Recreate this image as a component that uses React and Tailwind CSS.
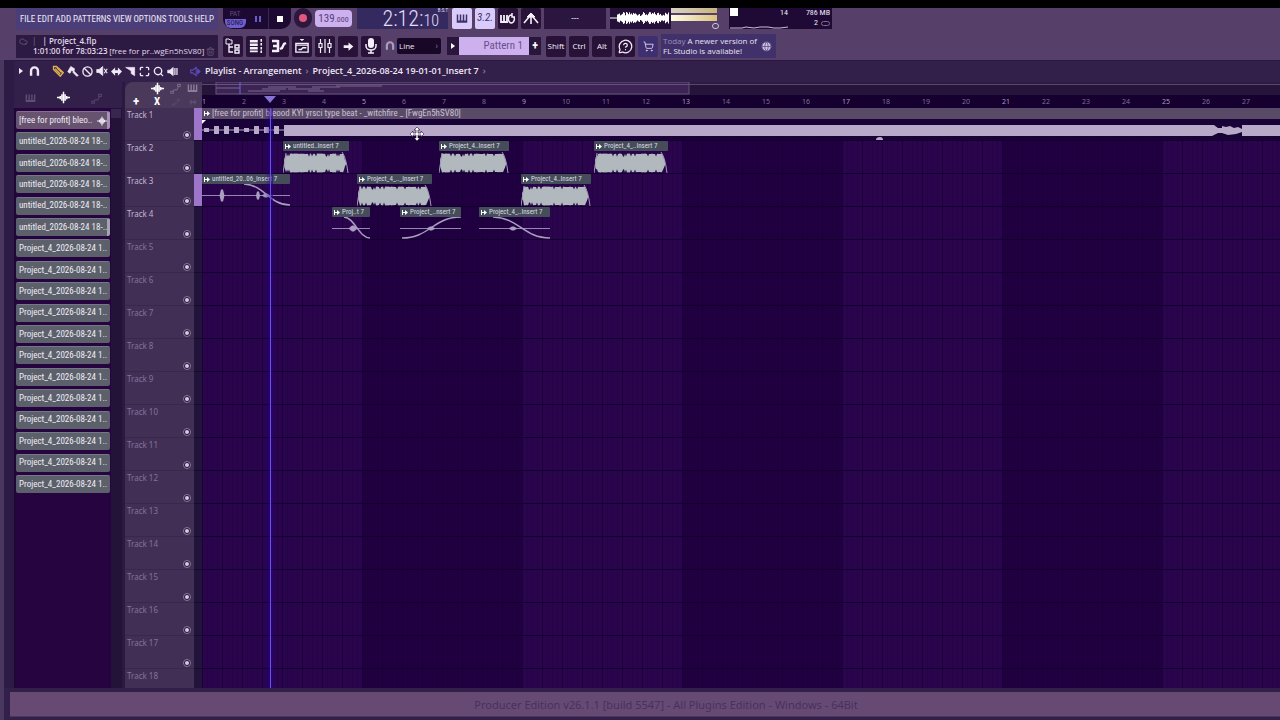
import {
  Ban,
  Cloud,
  Globe,
  Maximize,
  MessageCircleQuestionMark,
  Search,
  ShoppingCart,
  Trash2,
} from "lucide-react";

const MENU = ["FILE", "EDIT", "ADD", "PATTERNS", "VIEW", "OPTIONS", "TOOLS", "HELP"];

const PICKER = [
  "[free for profit] bleo..",
  ...Array(5).fill("untitled_2026-08-24 18-.."),
  ...Array(12).fill("Project_4_2026-08-24 1.."),
];

const BAR = 40;

const TRACKS = Array.from({ length: 18 }, (_, i) => ({
  name: `Track ${i + 1}`,
  active: i < 4,
  grouped: i === 0 || i === 2,
  clips: [],
}));

TRACKS[1].clips = [
  { x: 81, w: 66, label: "untitled..Insert 7", type: "wave", seed: 3 },
  { x: 237, w: 70, label: "Project_4..Insert 7", type: "wave", seed: 8 },
  { x: 392, w: 74, label: "Project_4_..Insert 7", type: "wave", seed: 5 },
];
TRACKS[2].clips = [
  { x: 0, w: 88, label: "untitled_20..06_Insert 7", type: "fade", from: 42, blobs: [[20, 5, 6], [56, 4, 4], [64, 9, 2]] },
  { x: 155, w: 75, label: "Project_4_.._Insert 7", type: "wave", seed: 11 },
  { x: 319, w: 70, label: "Project_4..Insert 7", type: "wave", seed: 14 },
];
TRACKS[3].clips = [
  { x: 130, w: 38, label: "Proj..t 7", type: "fade", from: 12, blobs: [[21, 9, 3]] },
  { x: 198, w: 61, label: "Project_..nsert 7", type: "rise", from: 2, blobs: [[31, 9, 2]] },
  { x: 277, w: 71, label: "Project_4_..Insert 7", type: "fade", from: 14, blobs: [[34, 9, 2]] },
];

function noise(n) {
  const v = Math.sin(n * 12.9898) * 43758.5453;
  return v - Math.floor(v);
}

function wavePath(width, mid, amp, seed) {
  const up = [];
  const down = [];
  for (let x = 0; x <= width; x++) {
    const edge = Math.min(1, (x + 1) / 3, (width - x + 1) / 4);
    const dip = noise(x * 3 + seed * 7) > 0.86 ? 0.7 : 1;
    const h = amp * edge * dip * (0.94 + noise(x + seed) * 0.06);
    up.push(`${x},${(mid - h).toFixed(1)}`);
    down.unshift(`${x},${(mid + h).toFixed(1)}`);
  }
  return `M${up.join("L")}L${down.join("L")}Z`;
}

function ClipBody({ clip }) {
  const { w, type, from = 0, blobs = [], seed } = clip;
  if (type === "wave") {
    return (
      <svg width={w} height="22" className="block" fill="#b1b9bf">
        <path d={wavePath(w - 4, 12, 9.5, seed)} transform="translate(1 0)" />
        <path d={`M0 22L3 2M${w - 7} 1Q${w - 3} 6 ${w - 1} 22`} fill="none" stroke="#a29bb6" />
      </svg>
    );
  }
  const mid = (from + w) / 2;
  const curve =
    type === "fade"
      ? `M${from} 0C${mid - 2} 1 ${mid + 2} 21 ${w} 21`
      : `M${from} 21C${mid - 2} 21 ${mid + 2} 0 ${w} 0`;
  return (
    <svg width={w} height="22" className="block" fill="#a99fc0">
      <path d={`M0 11.5H${w}`} stroke="#9388b0" />
      {blobs.map(([x, bw, h]) => (
        <path key={x} d={`M${x - bw / 2} 11.500L${x - 1} ${11.5 - h}H${x + 1}L${x + bw / 2} 11.500L${x + 1} ${11.5 + h}H${x - 1}Z`} />
      ))}
      <path d={curve} fill="none" stroke="#a99fbf" strokeWidth="1.5" />
    </svg>
  );
}

function ClipArrow() {
  return (
    <svg width="7" height="7" viewBox="0 0 7 7" className="shrink-0" fill="#fff">
      <path d="M0 1h1v5H0zM1 3h2V1l3 2.5L3 6V4H1z" />
    </svg>
  );
}

function Clip({ clip }) {
  return (
    <div className="absolute top-0" style={{ left: clip.x, width: clip.w }}>
      <div className="flex h-[10px] items-center gap-px rounded-[1px] bg-[#464d5a] pl-[2px] text-[7px] leading-[10px] whitespace-nowrap text-[#dcdce4]">
        <ClipArrow />
        <span>{clip.label}</span>
      </div>
      <ClipBody clip={clip} />
    </div>
  );
}

function MainClip() {
  return (
    <div className="absolute inset-0 overflow-hidden bg-[#190238]">
      <div className="flex h-[11px] items-center gap-px bg-[#594b68] pl-[2px] text-[9px] leading-[11px] whitespace-nowrap text-[#cabfd5]">
        <ClipArrow />
        <span>[free for profit] bleood KYI yrsci type beat - _witchfire _ [FwgEn5hSV80]</span>
      </div>
      <svg width="1078" height="21" className="block" fill="#b9a9c9">
        <path d="M0 11H82" stroke="#b9a9c9" />
        {[5, 15, 25, 35, 45, 55, 65, 75].map((x, i) => {
          const h = [2, 4, 4, 3, 2, 4, 3, 4][i];
          return <rect key={x} x={x - 3} y={11 - h} width="5" height={h * 2} />;
        })}
        <path d="M82 6H1012L1016 9H1020V7L1024 8L1028 7L1032 9L1036 8L1040 10V6H1078V17H1040V13L1034 15L1026 16L1020 14H1016L1010 17H82Z" />
        <path d="M674 21q0-3 4-3q3 0 3 3z" />
      </svg>
      <svg width="5" height="5" className="absolute top-[12px] left-0" fill="#fff">
        <path d="M0 0h4L0 4z" />
      </svg>
    </div>
  );
}

function Glyph({ name, className = "h-4 w-4" }) {
  const shapes = {
    browser: (
      <>
        <path d="M1 1h3l1 1h2v4H1z" />
        <path d="M4 6v8h4M4 9h4M10 7h4v3h-4zM10 12h4v3h-4z" strokeWidth="1.400" />
      </>
    ),
    rack: (
      <>
        <path d="M1 1h9v3H1zM1 5h9v3H1zM1 9h9v3H1zM1 13h9v2H1z" fill="currentColor" stroke="none" />
        <path d="M14 0v3M14 4.500v3M14 9v3M14 13v3" strokeWidth="1.800" />
      </>
    ),
    piano: (
      <>
        <path d="M1 3h6M2 8h5M1 13h6M7 2v12" strokeWidth="2.5" />
        <path d="M9 11l2-1 2-4 2-1" strokeWidth="2.400" />
      </>
    ),
    playlist: (
      <>
        <path d="M1 5h14v10H1zM1 7h14M4 12h3l2-2h4" strokeWidth="1.6" />
        <path d="M6 0h4L8 2z" fill="currentColor" />
      </>
    ),
    mixer: <path d="M3.500 1v4M3.500 10v5M8 1v14M12.500 1v4M12.500 10v5M2 5.500h3v4H2zM11 5.500h3v4h-3z" strokeWidth="1.200" />,
    arrow: <path d="M1 6h7V2l7 6-7 6v-4H1z" fill="currentColor" stroke="none" />,
    mic: (
      <>
        <rect x="5" y="0" width="6" height="10" rx="3" fill="currentColor" stroke="none" />
        <path d="M3 6v2a5 4 0 0 0 10 0V6M8 12v3M5 15h6" strokeWidth="1.500" />
      </>
    ),
    magnet: <path d="M3 14V7a5 5 0 0 1 10 0v7" strokeWidth="3.500" />,
    keys: <path d="M2 2v10h12V2M6 2v10M10 2v10M2 11h12" strokeWidth="2" />,
    wave: <path d="M0 8h3M4 6v4M6 4v8M8 1v14M10 4v8M12 6v4M13 8h3" strokeWidth="1.800" />,
    auto: <path d="M3 13L6 10H10L13 4M1 12h4v3H1zM11 2h4v3h-4z" strokeWidth="1.500" />,
    pencil: <path d="M2 2l4 0 9 8-4 5L2 6zM4 5l7 7M6 3l7 7" strokeWidth="1.800" />,
    brush: <path d="M1 9L5 2l5 3-1 4-3-2-2 4zM9 8l6 6-2 1-5-5z" fill="currentColor" />,
    mute: (
      <>
        <path d="M1 6h3l5-4v12l-5-4H1z" fill="currentColor" />
        <path d="M11 5l4 6M15 5l-4 6" strokeWidth="1.500" />
      </>
    ),
    slip: <path d="M0 8l6-6v4h4V2l6 6-6 6v-4H6v4z" fill="currentColor" stroke="none" />,
    slice: <path d="M1 2h13v12l-5-3V7z" fill="currentColor" />,
    speaker: (
      <>
        <path d="M1 6h3l5-4v12l-5-4H1z" fill="currentColor" />
        <path d="M11.500 3v10M14.500 3v10" strokeWidth="1.800" />
      </>
    ),
    sound: (
      <>
        <path d="M1 6h3l5-4v12l-5-4H1z" strokeWidth="1.500" />
        <path d="M11 4l4 4-4 4z" fill="currentColor" />
      </>
    ),
    metronome: (
      <>
        <path d="M1 12L6 6l2-2 2 2 5 6M8 6v7" strokeWidth="1.600" />
        <path d="M8 2l4 4H4z" fill="currentColor" />
      </>
    ),
    loop: (
      <>
        <path d="M1 4v7h6V4M4 4v7" strokeWidth="1.800" />
        <path d="M12 4a3 4 0 1 0 2 2M12 2v4h3" strokeWidth="1.500" />
      </>
    ),
  };
  return (
    <svg viewBox="0 0 16 16" className={`${className} shrink-0`} fill="none" stroke="currentColor" aria-hidden="true">
      {shapes[name]}
    </svg>
  );
}

function ToolButton({ label, children, className = "bg-[#281238] text-[#f4effa]" }) {
  return (
    <button
      type="button"
      aria-label={label}
      className={`flex h-[21px] w-[20px] shrink-0 items-center justify-center rounded-[2px] ${className}`}
    >
      {children}
    </button>
  );
}

function TopBar() {
  return (
    <div className="flex h-[24px] items-start">
      <nav className="ml-[16px] flex h-[22px] w-[202px] shrink-0 items-center justify-between bg-[#4b3e78] px-[4px] text-[9px] leading-[20px] text-[#efe9f6]">
        {MENU.map((item) => (
          <button key={item} type="button">{item}</button>
        ))}
      </nav>
      <div className="ml-[5px] flex h-[21px] w-[68px] shrink-0 items-center rounded-b-[10px] bg-[#1c0a32]">
        <button type="button" className="flex h-full w-[24px] flex-col items-center justify-center text-[7px] leading-[9px]">
          <span className="text-[#5d4a78]">PAT</span>
          <span className="w-[21px] rounded-b-[6px] bg-[#6d60cc] text-center text-[#221148]">SONG</span>
        </button>
        <button type="button" aria-label="Pause" className="flex h-full w-[21px] items-center justify-center gap-[2px]">
          <span className="h-[6px] w-[2px] bg-[#6a5cc4]" />
          <span className="h-[6px] w-[2px] bg-[#6a5cc4]" />
        </button>
        <button type="button" aria-label="Stop" className="flex h-full w-[23px] items-center justify-center border-l border-[#3a2752]">
          <span className="h-[6px] w-[6px] bg-white" />
        </button>
      </div>
      <button type="button" aria-label="Record" className="ml-[3px] flex h-[20px] w-[18px] shrink-0 items-center justify-center rounded-full bg-[#2d173f]">
        <span className="h-[8px] w-[8px] rounded-full bg-[#e0587c]" />
      </button>
      <div className="mt-[2px] ml-[3px] flex h-[17px] w-[37px] shrink-0 items-baseline justify-center rounded-[4px] bg-[#cdb0ee] leading-[17px] text-[#55407c]">
        <span className="text-[11px]">139</span>
        <span className="text-[8px]">.000</span>
      </div>
      <div className="relative ml-[5px] flex h-[21px] w-[91px] shrink-0 items-baseline justify-end bg-[#352a60] pr-[9px] leading-[21px] font-light text-[#e4def8]">
        <span className="text-[22px]">2:12:</span>
        <span className="text-[16px]">10</span>
        <span className="absolute top-0 right-0 text-[5px] leading-[5px] font-normal">B:S:T</span>
      </div>
      <div className="ml-[4px] flex shrink-0 gap-[3px]">
        <ToolButton label="Typing keyboard" className="bg-[#d9ccfa] text-[#40306c]">
          <Glyph name="keys" className="h-[12px] w-[14px]" />
        </ToolButton>
        <ToolButton label="Countdown" className="bg-[#d9ccfa] text-[#40306c]">
          <span className="text-[11px] italic">3.2.</span>
        </ToolButton>
        <ToolButton label="Loop recording">
          <Glyph name="loop" />
        </ToolButton>
        <ToolButton label="Metronome">
          <Glyph name="metronome" />
        </ToolButton>
      </div>
      <div className="ml-[3px] flex h-[21px] w-[62px] shrink-0 items-center justify-center bg-[#2b163f] text-[10px] text-[#d8cce6]">---</div>
      <div className="ml-[4px] flex h-[21px] w-[110px] shrink-0">
        <svg width="61" height="21" className="bg-[#25103a]" fill="#fff">
          <path d="M0 10h8" stroke="#fff" />
          {Array.from({ length: 52 }, (_, i) => {
            const h = 2 + noise(i + 4) * 4;
            return <rect key={i} x={7 + i} y={10 - h} width="1" height={h * 2} />;
          })}
        </svg>
        <div className="relative flex w-[48px] flex-col gap-[2px]">
          <span className="h-[5px] w-[46px] bg-linear-to-r from-[#d8d2c8] to-[#c9b47c]" />
          <span className="h-[6px] w-[46px] bg-linear-to-r from-[#fffbe4] to-[#dac27e]" />
          <span className="absolute right-0 bottom-0 h-[6px] w-[7px] rounded-full border border-[#d0c4dc]" />
        </div>
      </div>
      <div className="ml-[9px] flex h-[21px] w-[103px] shrink-0 bg-[#1e0a34] pl-[1px] text-[8px] leading-[10px] text-[#eee8f6]">
        <div className="flex flex-1 flex-col justify-between">
          <div className="flex justify-between">
            <span className="h-[8px] w-[8px] bg-white" />
            <span>14</span>
          </div>
          <svg width="58" height="3" fill="none" stroke="#c8bed8">
            <path d="M0 2H12L16 1L24 2L30 1H38L44 2H50L58 1" />
          </svg>
        </div>
        <div className="flex w-[44px] flex-col items-end pr-[2px]">
          <span>786 MB</span>
          <span className="flex items-center gap-[3px]">
            2 <span className="h-[5px] w-[9px] rounded-full border border-[#7d6b92]" />
          </span>
        </div>
      </div>
    </div>
  );
}

function ShortcutBar() {
  return (
    <div className="flex h-[28px] items-center">
      <div className="ml-[16px] flex h-[23px] w-[202px] shrink-0 flex-col justify-center bg-[#2d1a42] px-[3px] font-['Open_Sans','Noto_Sans',sans-serif] text-[8px] leading-[10px] font-semibold whitespace-nowrap text-[#e2d8ec]">
        <div className="flex items-center gap-[4px]">
          <Cloud size={9} className="text-[#6e5b82]" />
          <span className="text-[#6e5b82]">|</span>
          <span className="ml-[2px]">| Project_4.flp</span>
        </div>
        <div className="flex items-center justify-between pl-[14px]">
          <span>1:01:00 for 78:03:23</span>
          <span className="font-normal">[free for pr..wgEn5hSV80]</span>
          <Trash2 size={9} className="text-[#6e5b82]" />
        </div>
      </div>
      <div className="ml-[5px] flex shrink-0 gap-[3px]">
        <ToolButton label="Browser"><Glyph name="browser" /></ToolButton>
        <ToolButton label="Channel rack"><Glyph name="rack" className="h-[14px] w-[14px]" /></ToolButton>
        <ToolButton label="Piano roll"><Glyph name="piano" /></ToolButton>
        <ToolButton label="Playlist"><Glyph name="playlist" className="h-[14px] w-[14px]" /></ToolButton>
        <ToolButton label="Mixer"><Glyph name="mixer" /></ToolButton>
        <ToolButton label="Step edit"><Glyph name="arrow" className="h-[11px] w-[11px]" /></ToolButton>
        <ToolButton label="Record audio"><Glyph name="mic" /></ToolButton>
      </div>
      <button type="button" aria-label="Snap" className="ml-[4px] text-[#a99cc0]">
        <Glyph name="magnet" className="h-[10px] w-[10px]" />
      </button>
      <div className="relative ml-[2px] h-[16px] w-[44px] shrink-0">
        <select
          aria-label="Snap to grid"
          className="block h-[16px] w-full appearance-none rounded-[2px] bg-[#190728] pl-[2px] font-['Open_Sans','Noto_Sans',sans-serif] text-[8px] leading-[16px] text-[#efe9f6]"
        >
          <option>Line</option>
        </select>
        <span className="pointer-events-none absolute top-0 right-[3px] text-[9px] leading-[16px] text-[#8d7ba4]">›</span>
      </div>
      <button type="button" aria-label="Pattern menu" className="ml-[6px] flex h-[18px] w-[12px] shrink-0 items-center justify-center bg-[#2a153c]">
        <svg width="4" height="6" fill="#fff"><path d="M0 0l4 3-4 3z" /></svg>
      </button>
      <input
        aria-label="Pattern"
        defaultValue="Pattern 1"
        className="h-[18px] w-[70px] shrink-0 bg-[#cdb0ee] pr-[6px] text-right text-[11px] leading-[18px] text-[#69518c]"
      />
      <button type="button" aria-label="Add pattern" className="h-[18px] w-[12px] shrink-0 bg-[#2a153c] text-[12px] leading-[16px] font-bold text-white">+</button>
      <div className="ml-[5px] flex shrink-0 gap-[3px] font-['Open_Sans','Noto_Sans',sans-serif] text-[8px]">
        <ToolButton label="Shift">Shift</ToolButton>
        <ToolButton label="Ctrl">Ctrl</ToolButton>
        <ToolButton label="Alt">Alt</ToolButton>
        <ToolButton label="Help"><MessageCircleQuestionMark size={15} /></ToolButton>
        <ToolButton label="Shop" className="bg-[#3e3070] text-[#d9cff0]"><ShoppingCart size={11} /></ToolButton>
      </div>
      <button
        type="button"
        className="ml-[3px] flex h-[24px] w-[115px] shrink-0 items-center justify-between bg-[#41316b] pr-[4px] pl-[2px] text-left font-['Open_Sans','Noto_Sans',sans-serif] text-[8px] leading-[10px] whitespace-nowrap text-[#eae2f4]"
      >
        <span>
          <span className="mr-[2px] text-[#9d8cba]">Today</span>A newer version of
          <br />
          FL Studio is available!
        </span>
        <Globe size={11} fill="#cfc4de" className="text-[#6a5790]" />
      </button>
    </div>
  );
}

function PlaylistTitle() {
  return (
    <div className="flex h-[22px] items-center border-t border-[#2a1840] bg-[#33204a] pb-px pl-[5px] text-[#efe8f6]">
      <svg width="4" height="6" fill="#efe8f6"><path d="M0 0l4 3-4 3z" /></svg>
      <button type="button" aria-label="Snap" className="ml-[6px]"><Glyph name="magnet" className="h-[11px] w-[11px]" /></button>
      <div className="ml-[12px] flex items-center gap-[3px]">
        <button type="button" aria-label="Draw" className="text-[#e0b050]"><Glyph name="pencil" className="h-[12px] w-[12px]" /></button>
        <button type="button" aria-label="Paint"><Glyph name="brush" className="h-[12px] w-[12px]" /></button>
        <button type="button" aria-label="Delete"><Ban size={11} strokeWidth={3} /></button>
        <button type="button" aria-label="Mute"><Glyph name="mute" className="h-[12px] w-[12px]" /></button>
        <button type="button" aria-label="Slip"><Glyph name="slip" className="h-[11px] w-[11px]" /></button>
        <button type="button" aria-label="Slice"><Glyph name="slice" className="h-[11px] w-[11px]" /></button>
        <button type="button" aria-label="Select"><Maximize size={11} strokeWidth={3} /></button>
        <button type="button" aria-label="Zoom"><Search size={11} strokeWidth={3} /></button>
        <button type="button" aria-label="Playback"><Glyph name="speaker" className="h-[11px] w-[11px]" /></button>
      </div>
      <span className="ml-[12px] text-[#5c4dba]"><Glyph name="sound" className="h-[11px] w-[11px]" /></span>
      <h1 className="ml-[4px] flex items-center gap-[4px] font-['Open_Sans','Noto_Sans',sans-serif] text-[9px] font-semibold whitespace-nowrap">
        <span>Playlist - Arrangement</span>
        <span className="text-[#8a78a2]">›</span>
        <span>Project_4_2026-08-24 19-01-01_Insert 7</span>
        <span className="text-[#8a78a2]">›</span>
      </h1>
    </div>
  );
}

function Picker() {
  return (
    <aside className="flex w-[108px] shrink-0 flex-col">
      <div className="flex h-[26px] shrink-0 items-end gap-[21px] pb-[4px] pl-[11px]">
        <button type="button" aria-label="Patterns" className="text-[#604d74]"><Glyph name="keys" className="h-[11px] w-[11px]" /></button>
        <button type="button" aria-label="Audio clips" className="text-white"><Glyph name="wave" className="h-[13px] w-[13px]" /></button>
        <button type="button" aria-label="Automation clips" className="text-[#543f69]"><Glyph name="auto" className="h-[11px] w-[11px]" /></button>
      </div>
      <div className="flex min-h-0 flex-1 border-l border-[#1a0830] bg-[#25043f]">
        <ul className="flex h-[385px] w-[96px] flex-col justify-between pt-[3px] pl-[1px]">
          {PICKER.map((name, i) => (
            <li key={i}>
              <button
                type="button"
                className={`flex h-[18px] w-[94px] items-center justify-between rounded-[2px] border-t pl-[3px] text-[9px] whitespace-nowrap text-[#f0ecf4] ${
                  i === 0
                    ? "border-r-3 border-t-[#84708e] border-r-[#a692b4] bg-[#67536f]"
                    : "border-t-[#747886] bg-[#5b606b]"
                } ${i === 5 ? "border-r-3 border-r-[#a3a6b0]" : ""}`}
              >
                {name}
                {i === 0 && <Glyph name="wave" className="h-[10px] w-[10px]" />}
              </button>
            </li>
          ))}
        </ul>
        <div className="ml-auto w-[11px] bg-[#231339]">
          <div className="mt-[1px] h-[9px] w-[10px] bg-[#382650]" />
        </div>
      </div>
    </aside>
  );
}

function TrackHeaders() {
  return (
    <section className="flex w-[80px] shrink-0 flex-col border-l-3 border-[#2c1942]">
      <div className="grid h-[26px] shrink-0 grid-cols-[22px_20px_17px_17px] place-items-center rounded-tl-[8px] bg-[#4a395b] text-white">
        <span />
        <Glyph name="wave" className="h-[13px] w-[13px]" />
        <Glyph name="auto" className="h-[11px] w-[11px] text-[#75648a]" />
        <Glyph name="keys" className="h-[11px] w-[11px] text-[#8c7c9e]" />
        <button type="button" aria-label="Add track" className="text-[13px] leading-[12px] font-bold">+</button>
        <button type="button" aria-label="Close" className="text-[11px] leading-[12px] font-bold">X</button>
        <Glyph name="auto" className="h-[8px] w-[8px] text-[#5c4a70]" />
        <Glyph name="slip" className="h-[8px] w-[8px] text-[#5c4a70]" />
      </div>
      <div className="min-h-0 flex-1 overflow-hidden">
        {TRACKS.map((track) => (
          <div key={track.name} className="flex h-[33px]">
            <div className="flex flex-1 justify-between border-b border-[#382849] bg-[#412f56] pr-[3px] pl-[2px]">
              <span className={`font-['Noto_Sans','Open_Sans',sans-serif] text-[8px] leading-[13px] ${track.active ? "text-[#c5b7d2]" : "text-[#85739a]"}`}>
                {track.name}
              </span>
              <button
                type="button"
                aria-label={`Mute ${track.name}`}
                className="mb-px flex h-[8px] w-[8px] items-center justify-center self-end rounded-full border border-[#8b7b9c] bg-[#241338]"
              >
                <span className="h-[4px] w-[4px] rounded-full bg-[#d6cae2]" />
              </button>
            </div>
            <div className={`w-[8px] border-b border-[#190b2c] ${track.grouped ? "bg-[#9d76cc]" : "bg-[#21133a]"}`} />
          </div>
        ))}
      </div>
    </section>
  );
}

function Minimap() {
  return (
    <div className="relative h-[13px] shrink-0 overflow-hidden bg-[#26143a]">
      <div className="h-[3px] border-b border-[#5a476e] bg-[#2e1b44]" />
      <svg width="488" height="13" className="absolute top-0 left-0" fill="none" stroke="#66527c">
        <rect x="14" y="0" width="473" height="12" fill="#3c2454" />
        <path d="M14 2.500H487" />
        <path d="M14 6H38M66 5H94M46 9H78M60 7H84M86 7H118M110 5H138M134 4H180M106 9H122" strokeWidth="1.500" />
        <path d="M38 0V12" stroke="#7564e0" />
      </svg>
    </div>
  );
}

function Timeline() {
  return (
    <section className="relative flex min-w-0 flex-1 flex-col overflow-hidden">
      <Minimap />
      <div className="relative flex h-[13px] shrink-0 overflow-hidden bg-[#15002f] font-['Noto_Sans','Open_Sans',sans-serif] text-[7px] leading-[13px]">
        {Array.from({ length: 27 }, (_, i) => (
          <span
            key={i}
            className={`shrink-0 ${i % 4 === 0 ? "text-[#a99abf]" : "text-[#7f6e98]"}`}
            style={{ width: BAR }}
          >
            {i + 1}
          </span>
        ))}
      </div>
      <div className="relative min-h-0 flex-1 overflow-hidden bg-[repeating-linear-gradient(90deg,#2a044c_0_160px,#200041_160px_320px)]">
        <div className="absolute inset-0 bg-[repeating-linear-gradient(90deg,#14003288_0_1px,transparent_1px_20px),repeating-linear-gradient(90deg,#18003844_0_1px,transparent_1px_5px)]" />
        {TRACKS.map((track, i) => (
          <div key={track.name} className="relative h-[33px] border-b border-[#14002e]">
            {i === 0 && <MainClip />}
            {track.clips.map((clip) => (
              <Clip key={clip.x} clip={clip} />
            ))}
          </div>
        ))}
        <div className="absolute inset-y-0 left-[62px] w-[9px] bg-linear-to-r from-transparent to-[#2000a0]/60" />
        <div className="absolute inset-y-0 left-[68px] w-px bg-[#6d55d8]" />
        <svg width="14" height="14" viewBox="0 0 14 14" className="absolute top-[19px] left-[208px]" fill="#fff" stroke="#1c0c30" strokeWidth=".6">
          <path d="M7 0l3 3H8v3h3V4l3 3-3 3V8H8v3h2l-3 3-3-3h2V8H3v2L0 7l3-3v2h3V3H4z" />
        </svg>
      </div>
      <svg width="12" height="8" className="absolute top-[14px] left-[62px]" fill="#8573d8">
        <path d="M0 0h12L6 7z" />
      </svg>
    </section>
  );
}

export default function App() {
  return (
    <div className="flex h-screen flex-col overflow-hidden bg-[#563f69] font-['Liberation_Sans_Narrow','Roboto_Condensed','Open_Sans_Condensed','Roboto',sans-serif] text-[#e9e2f2]">
      <div className="h-[8px] shrink-0 bg-black" />
      <header className="shrink-0">
        <TopBar />
        <ShortcutBar />
      </header>
      <main className="flex min-h-0 flex-1 flex-col border-l-4 border-[#4a3760] bg-[#2e1b45] pl-[10px]">
        <PlaylistTitle />
        <div className="flex min-h-0 flex-1 bg-[#33204a]">
          <Picker />
          <TrackHeaders />
          <Timeline />
        </div>
      </main>
      <footer className="flex h-[32px] shrink-0 border-l-4 border-[#4a3760] bg-[#33204a] pt-[4px] pb-[3px] pl-[6px]">
        <p className="flex flex-1 items-center justify-center border-b border-[#4a3760] bg-[#664a74] pt-[2px] pl-[42px] font-['Noto_Sans','Open_Sans',sans-serif] text-[11px] text-[#48305f]">
          Producer Edition v26.1.1 [build 5547] - All Plugins Edition - Windows - 64Bit
        </p>
      </footer>
    </div>
  );
}
